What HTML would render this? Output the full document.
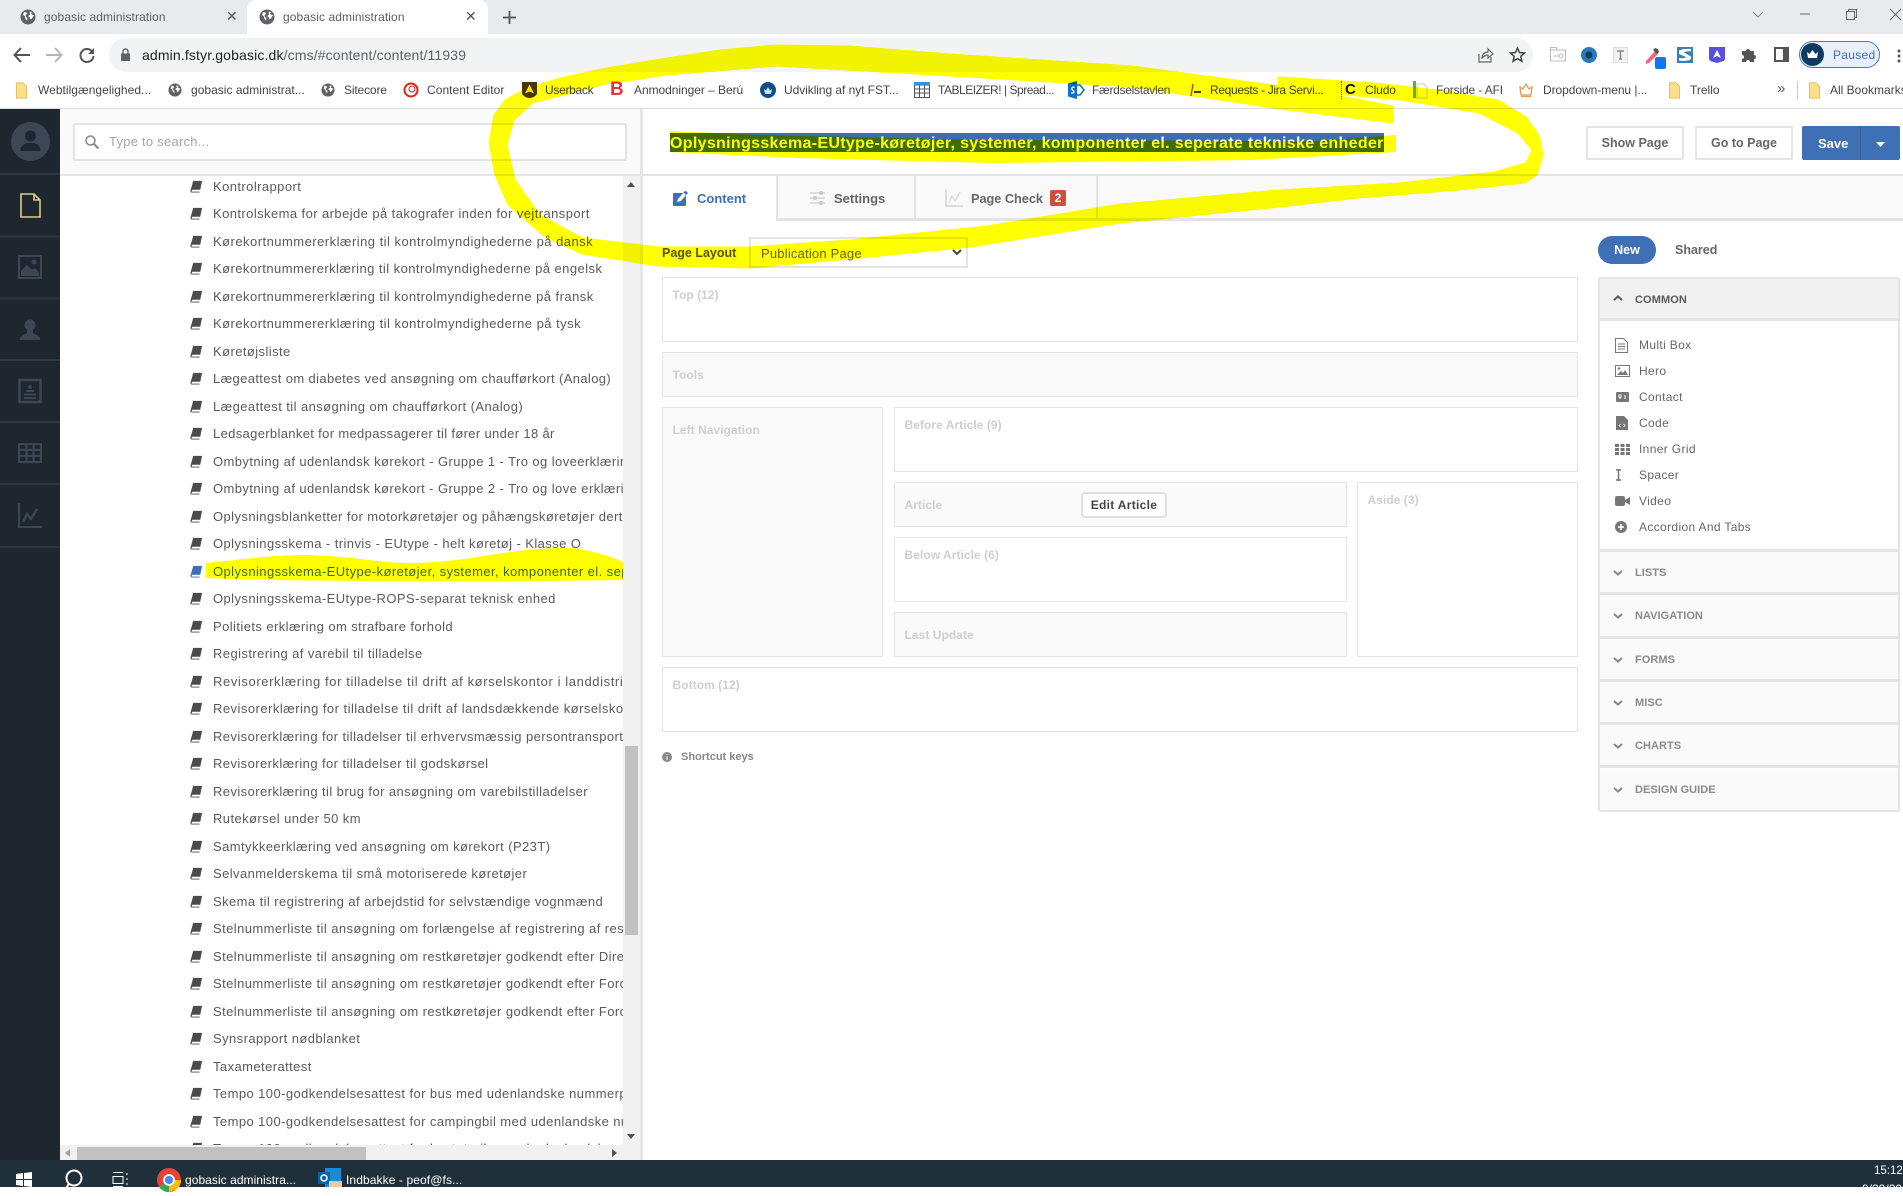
<!DOCTYPE html>
<html lang="da"><head><meta charset="utf-8"><title>gobasic administration</title>
<style>
*{box-sizing:border-box}
html,body{margin:0;padding:0;width:1903px;height:1187px;overflow:hidden;background:#fff;font-family:"Liberation Sans",sans-serif;color:#555}
.a{position:absolute;white-space:nowrap}
svg{position:absolute;overflow:visible}
.bm{position:absolute;top:83px;font-size:12px;line-height:14px;color:#444;white-space:nowrap}
.row{height:27.5px;line-height:27.5px;font-size:13px;letter-spacing:.42px;white-space:nowrap;padding-left:153px;position:relative;color:#5a5a5a}
.row svg{left:130px;top:7px}
.box{position:absolute;border:1.5px solid #e4e4e4;background:#fff;font-size:12px;font-weight:bold;color:#cfcfcf;padding-left:9.5px;letter-spacing:.05px}
.box.g{background:#fafafa}
.ph{position:absolute;left:1600px;width:298px;background:#fafafa;border-bottom:3px solid #e4e4e4;font-size:11px;font-weight:bold;color:#8a8a8a;letter-spacing:.05px}
.ph span{position:absolute;left:35px;top:15px}
.ph svg{left:13px;top:18px}
.it{position:absolute;left:1639px;font-size:12px;letter-spacing:.35px;color:#666;line-height:14px}
.btn{position:absolute;top:126px;height:34px;border:2px solid #e4e4e4;border-radius:2px;background:#fff;font-size:12.5px;font-weight:bold;color:#666;text-align:center;line-height:31px}
</style></head><body>
<svg width="0" height="0" style="position:absolute"><defs>
<symbol id="globe" viewBox="0 0 16 16"><circle cx="8" cy="8" r="7.5" fill="#5f6368"/><path d="M4 3l2.500.5.500 1.500-1.500 1 .5 2 1.500 1-.5 2.500-1.500-1.500-.5-2.500-2-1.500zM10 2.500l2 1-1 1.500 2 1 1.500.5-1.500 1-1 2-1.500 1-.5-2-1.500-1 .5-1.500 1.500-.5-1-1.500z" fill="#fff"/></symbol>
<symbol id="folder" viewBox="0 0 13 20"><path d="M1 2h7l4 4v13H1z" fill="#fbe08a" stroke="#e2b94e"/></symbol>
<symbol id="book" viewBox="0 0 14 14"><path d="M3.500 1h9.500l-2 9.500H2.500L1.500 12.500h9l-.2 1H1.500q-1.300-.5-1-2zM1.500 11.500" fill="#4b4b4b"/><path d="M2 12h9" stroke="#fff" stroke-width=".8"/></symbol>
<symbol id="bookb" viewBox="0 0 14 14"><path d="M3.500 1h9.500l-2 9.500H2.500L1.500 12.500h9l-.2 1H1.500q-1.300-.5-1-2z" fill="#3f6fb5"/><path d="M2 12h9" stroke="#fff" stroke-width=".8"/></symbol>
<symbol id="chd" viewBox="0 0 10 6"><path d="M1 1l4 3.500L9 1" fill="none" stroke="#888" stroke-width="2"/></symbol>
</defs></svg>

<!-- Chrome tab strip -->
<div class="a" style="left:0;top:0;width:1903px;height:34px;background:#e8eaed"></div>
<div class="a" style="left:247px;top:0;width:241px;height:34px;background:#fff;border-radius:9px 9px 0 0"></div>
<svg style="left:20px;top:9px" width="16" height="16"><use href="#globe"/></svg>
<div class="a" style="left:44px;top:10px;font-size:12px;line-height:14px;color:#5c5f63;letter-spacing:.1px">gobasic administration</div>
<div class="a" style="left:226px;top:8px;font-size:14px;line-height:17px;color:#555">✕</div>
<svg style="left:259px;top:9px" width="16" height="16"><use href="#globe"/></svg>
<div class="a" style="left:283px;top:10px;font-size:12px;line-height:14px;color:#5c5f63;letter-spacing:.1px">gobasic administration</div>
<div class="a" style="left:465px;top:8px;font-size:14px;line-height:17px;color:#555">✕</div>
<svg style="left:503px;top:11px" width="13" height="13"><path d="M6.500 0v13M0 6.500h13" stroke="#555" stroke-width="1.800"/></svg>
<svg style="left:1752px;top:11px" width="12" height="7"><path d="M1 1l5 5 5-5" fill="none" stroke="#888"/></svg>
<svg style="left:1800px;top:13px" width="10" height="2"><path d="M0 1h10" stroke="#666"/></svg>
<svg style="left:1846px;top:9px" width="11" height="11"><path d="M.5 2.500h8v8h-8zM2.500 2.500v-2h8v8h-2" fill="none" stroke="#666"/></svg>
<svg style="left:1890px;top:9px" width="11" height="11"><path d="M0 0l11 11M11 0L0 11" stroke="#666"/></svg>

<!-- toolbar -->
<div class="a" style="left:0;top:34px;width:1903px;height:75px;background:#fff"></div>
<div class="a" style="left:109px;top:38px;width:1424px;height:34px;background:#f1f3f4;border-radius:17px"></div>
<svg style="left:13px;top:47px" width="18" height="16"><path d="M8 1L1.500 8 8 15M2 8h15" fill="none" stroke="#555" stroke-width="2"/></svg>
<svg style="left:45px;top:47px" width="18" height="16"><path d="M10 1l6.500 7L10 15M16 8H1" fill="none" stroke="#b5b5b5" stroke-width="2"/></svg>
<svg style="left:79px;top:47px" width="16" height="16"><path d="M13.500 5A6.500 6.500 0 1 0 14.500 9" fill="none" stroke="#555" stroke-width="2"/><path d="M15 1v6H9z" fill="#555"/></svg>
<svg style="left:121px;top:48px" width="9" height="13"><path d="M0 5.500h9V13H0z" fill="#5f6368"/><path d="M2 6V3.500a2.500 2.500 0 0 1 5 0V6" fill="none" stroke="#5f6368" stroke-width="1.400"/></svg>
<div class="a" style="left:142px;top:47px;font-size:14px;line-height:16px;color:#222;letter-spacing:.14px">admin.fstyr.gobasic.dk<span style="color:#5f6368">/cms/#content/content/11939</span></div>
<svg style="left:1478px;top:47px" width="16" height="16"><path d="M1 7v8h12v-5" fill="none" stroke="#666" stroke-width="1.200"/><path d="M4 11c0-4 3-6 6-6V2l5 5-5 4V8c-2 0-4 1-6 3z" fill="none" stroke="#666" stroke-width="1.200"/></svg>
<svg style="left:1510px;top:47px" width="15" height="15"><path d="M7.500 1l2 4.500 5 .5-3.700 3.300 1.100 4.900-4.400-2.600-4.400 2.600 1.100-4.900L.5 6l5-.5z" fill="none" stroke="#444" stroke-width="1.500"/></svg>
<svg style="left:1550px;top:47px" width="16" height="15"><path d="M.5 3h15v11H.5zM.5 3V.5h6V3" fill="none" stroke="#bbb"/><path d="M3 9h6" stroke="#bbb"/><circle cx="11" cy="9" r="2" fill="none" stroke="#bbb"/></svg>
<svg style="left:1581px;top:47px" width="16" height="16"><circle cx="8" cy="8" r="8" fill="#2a79b8"/><circle cx="8" cy="8" r="3.500" fill="#103c60"/></svg>
<svg style="left:1613px;top:47px" width="15" height="16"><path d="M.5.500h14v15H.5z" fill="#f2f2f2" stroke="#ddd"/><path d="M4 4h7M7.500 4v8M6 12h3" stroke="#888" stroke-width="1.500" fill="none"/></svg>
<svg style="left:1645px;top:47px" width="22" height="23"><path d="M1 14L10 4l3 3-9 9-3 1z" fill="#e8688a"/><path d="M8 3l2-2 3 1 1 3-2 2z" fill="#555"/><rect x="10" y="10" width="11" height="12" rx="2" fill="#1a73e8"/></svg>
<svg style="left:1677px;top:47px" width="16" height="16"><rect x="0" y="0" width="16" height="16" fill="#3a7fb5"/><path d="M2 3.500c3-1.500 8-2 12-1.500v2.500c-3-.5-6 0-7 1l7 4c1 2-1 4-3 4-3 .5-7 .5-9 0v-2.500c3 .5 6 .5 7-1L2 7z" fill="#fff"/></svg>
<svg style="left:1709px;top:47px" width="16" height="16"><path d="M0 0h16v11q0 3-3 3.500L8 16l-5-1.500Q0 14 0 11z" fill="#5a4fd8"/><path d="M8 3l4 8-4-2-4 2z" fill="#fff"/></svg>
<svg style="left:1742px;top:48px" width="14" height="14"><path d="M0 3h4a2 2 0 0 1 4 0h4v4a2 2 0 0 1 0 4v3H8a2 2 0 0 0-4 0H0v-3a2 2 0 0 0 0-4z" fill="#555"/></svg>
<svg style="left:1774px;top:47px" width="15" height="15"><path d="M1 1h13v13H1z" fill="#fff" stroke="#555" stroke-width="2"/><path d="M9 1h5v13H9z" fill="#555"/></svg>
<div class="a" style="left:1799px;top:41px;width:81px;height:27px;border-radius:14px;background:#e8f0fb;border:1.500px solid #3c78d8"></div>
<svg style="left:1801px;top:43px" width="23" height="23"><circle cx="11.500" cy="11.500" r="11.500" fill="#0f3b63"/><path d="M6 9l2.500 2 3-4 3 4 2.500-2-1 6H7z" fill="#fff"/></svg>
<div class="a" style="left:1833px;top:48px;font-size:12px;line-height:14px;color:#3a6fc8;letter-spacing:.3px">Paused</div>
<svg style="left:1897px;top:49px" width="4" height="14"><circle cx="2" cy="2" r="1.500" fill="#555"/><circle cx="2" cy="7" r="1.500" fill="#555"/><circle cx="2" cy="12" r="1.500" fill="#555"/></svg>

<!-- bookmarks -->
<svg style="left:15px;top:81px" width="13" height="18"><use href="#folder"/></svg>
<div class="bm" style="left:38px;letter-spacing:.03px">Webtilgængelighed...</div>
<svg style="left:168px;top:83px" width="14" height="14"><use href="#globe"/></svg>
<div class="bm" style="left:191px;letter-spacing:.02px">gobasic administrat...</div>
<svg style="left:321px;top:83px" width="14" height="14"><use href="#globe"/></svg>
<div class="bm" style="left:344px;letter-spacing:-.15px">Sitecore</div>
<svg style="left:403px;top:82px" width="16" height="16"><circle cx="8" cy="8" r="6.500" fill="#fff" stroke="#e0201c" stroke-width="2"/><circle cx="9" cy="7" r="3" fill="none" stroke="#e0201c"/></svg>
<div class="bm" style="left:427px;letter-spacing:.05px">Content Editor</div>
<svg style="left:522px;top:82px" width="15" height="16"><path d="M0 0h15v12q-3 4-7.500 4T0 12z" fill="#4a3508"/><path d="M7.500 2.500l4.500 9-4.500-2-4.500 2z" fill="#ffe25a"/></svg>
<div class="bm" style="left:545px;letter-spacing:-.3px">Userback</div>
<div class="a" style="left:610px;top:80px;font-size:19px;line-height:20px;font-weight:bold;color:#e0383e">B</div>
<div class="bm" style="left:634px;letter-spacing:-.05px">Anmodninger – Berú</div>
<svg style="left:760px;top:82px" width="16" height="16"><circle cx="8" cy="8" r="8" fill="#0f4f85"/><path d="M4 7l2 1.500L8 5l2 3.500L12 7l-1 5H5z" fill="#cfe2f2"/></svg>
<div class="bm" style="left:784px;letter-spacing:-.06px">Udvikling af nyt FST...</div>
<svg style="left:914px;top:82px" width="16" height="16"><path d="M.5 3h15v12.500H.5zM.5 7h15M.5 11h15M5.500 3v12.500M10.500 3v12.500" fill="#fff" stroke="#555"/><rect width="16" height="3" fill="#2f90e8"/></svg>
<div class="bm" style="left:938px;letter-spacing:-.47px">TABLEIZER! | Spread...</div>
<svg style="left:1068px;top:81px" width="16" height="18"><path d="M0 2.500L9 0v18l-9-2.500z" fill="#0f6fc6"/><path d="M9 4h3l4 5-4 5H9" fill="none" stroke="#0f6fc6" stroke-width="1.500"/><path d="M6.500 6.500C4 5.500 3 7.500 4.500 9S7 11 5 12H3" fill="none" stroke="#fff" stroke-width="1.300"/></svg>
<div class="bm" style="left:1092px;letter-spacing:-.28px">Færdselstavlen</div>
<svg style="left:1187px;top:83px" width="16" height="14"><path d="M4 13L6 1" stroke="#c33" stroke-width="1.300"/><path d="M7 8h7v2H7z" fill="#444"/></svg>
<div class="bm" style="left:1210px;letter-spacing:-.33px">Requests - Jira Servi...</div>
<div class="a" style="left:1341px;top:81px;width:1px;height:18px;border-left:1px dotted #a33"></div>
<div class="a" style="left:1345px;top:81px;font-size:15px;line-height:18px;font-weight:bold;color:#111">C</div>
<div class="bm" style="left:1365px;letter-spacing:-.1px">Cludo</div>
<svg style="left:1413px;top:81px" width="15" height="18"><path d="M0 0h3v17H0z" fill="#6aa84f"/><path d="M4 3h7l3 3v11H4z" fill="#fff" stroke="#ccc"/></svg>
<div class="bm" style="left:1436px;letter-spacing:-.13px">Forside - AFI</div>
<svg style="left:1519px;top:82px" width="14" height="16"><path d="M1 5l3 2 3-5 3 5 3-2-1 8H2zM2 14.500h10" fill="none" stroke="#e89a50" stroke-width="1.300"/></svg>
<div class="bm" style="left:1543px;letter-spacing:-.05px">Dropdown-menu |...</div>
<svg style="left:1668px;top:81px" width="13" height="18"><use href="#folder"/></svg>
<div class="bm" style="left:1690px">Trello</div>
<div class="a" style="left:1777px;top:80px;font-size:15px;line-height:18px;color:#555">»</div>
<div class="a" style="left:1797px;top:81px;width:1px;height:18px;background:#ccc"></div>
<svg style="left:1808px;top:81px" width="13" height="18"><use href="#folder"/></svg>
<div class="bm" style="left:1830px">All Bookmarks</div>
<div class="a" style="left:0;top:108px;width:1903px;height:1px;background:#dadce0"></div>

<!-- sidebar -->
<div class="a" style="left:0;top:109px;width:60px;height:1051px;background:#1e2630"></div>
<svg style="left:0;top:109px" width="60" height="440"><path d="M0 65h60M0 127.500h60M0 189.500h60M0 251h60M0 313h60M0 375h60M0 438h60" stroke="#2d3641" stroke-width="2"/></svg>
<svg style="left:11px;top:122px" width="39" height="39"><circle cx="19.500" cy="19.500" r="19.500" fill="#3d4654"/><circle cx="19.500" cy="14" r="5.500" fill="#1e2630"/><path d="M9.500 29q0-8 10-8t10 8z" fill="#1e2630"/></svg>
<svg style="left:20px;top:193px" width="21" height="25"><path d="M1 1h13l6 6v17H1zM14 1v6h6" fill="none" stroke="#dccd7d" stroke-width="1.600"/></svg>
<svg style="left:18px;top:255px" width="24" height="24"><rect x="1" y="1" width="22" height="22" fill="none" stroke="#3d4654" stroke-width="2"/><path d="M3 21v-5l6-6 5 5 3-2 4 5v3z" fill="#3d4654"/><circle cx="16" cy="7" r="2.500" fill="#3d4654"/></svg>
<svg style="left:19px;top:319px" width="22" height="22"><circle cx="11" cy="6" r="5.500" fill="#3d4654"/><path d="M8 11h6v3l7 4v3H1v-3l7-4z" fill="#3d4654"/></svg>
<svg style="left:18px;top:379px" width="24" height="24"><rect x="1.500" y="1" width="21" height="22" fill="none" stroke="#3d4654" stroke-width="2.500"/><circle cx="12" cy="8" r="2" fill="#3d4654"/><path d="M8 12h8M6 15.500h12M6 19h12" stroke="#3d4654" stroke-width="2"/></svg>
<svg style="left:18px;top:443px" width="24" height="20"><path d="M1 1h22v18H1zM1 7h22M1 13h22M8.500 1v18M15.500 1v18" fill="none" stroke="#3d4654" stroke-width="2"/></svg>
<svg style="left:18px;top:503px" width="24" height="25"><path d="M1 0v24h23" fill="none" stroke="#3d4654" stroke-width="2"/><path d="M5 19l4-8 4 5 6-10" fill="none" stroke="#3d4654" stroke-width="2.500"/></svg>

<!-- search -->
<div class="a" style="left:60px;top:109px;width:580px;height:67px;background:#fafafa;border-bottom:2px solid #e6e6e6"></div>
<div class="a" style="left:73px;top:123px;width:554px;height:38px;background:#fff;border:2px solid #e4e4e4;border-radius:2px"></div>
<svg style="left:85px;top:135px" width="14" height="14"><circle cx="5.500" cy="5.500" r="4.500" fill="none" stroke="#888" stroke-width="1.500"/><path d="M9 9l4.500 4.500" stroke="#888" stroke-width="2"/></svg>
<div class="a" style="left:109px;top:134px;font-size:13px;line-height:16px;color:#a5a5a5;letter-spacing:.25px">Type to search...</div>

<!-- list -->
<div class="a" style="left:60px;top:176px;width:563px;height:969px;overflow:hidden;background:#fff">
<div style="margin-top:-3.5px">
<div class="row"><svg width="13" height="13"><use href="#book"/></svg>Kontrolrapport</div>
<div class="row"><svg width="13" height="13"><use href="#book"/></svg>Kontrolskema for arbejde på takografer inden for vejtransport</div>
<div class="row" style="letter-spacing:.47px"><svg width="13" height="13"><use href="#book"/></svg>Kørekortnummererklæring til kontrolmyndighederne på dansk</div>
<div class="row" style="letter-spacing:.44px"><svg width="13" height="13"><use href="#book"/></svg>Kørekortnummererklæring til kontrolmyndighederne på engelsk</div>
<div class="row" style="letter-spacing:.46px"><svg width="13" height="13"><use href="#book"/></svg>Kørekortnummererklæring til kontrolmyndighederne på fransk</div>
<div class="row" style="letter-spacing:.47px"><svg width="13" height="13"><use href="#book"/></svg>Kørekortnummererklæring til kontrolmyndighederne på tysk</div>
<div class="row"><svg width="13" height="13"><use href="#book"/></svg>Køretøjsliste</div>
<div class="row" style="letter-spacing:.37px"><svg width="13" height="13"><use href="#book"/></svg>Lægeattest om diabetes ved ansøgning om chaufførkort (Analog)</div>
<div class="row"><svg width="13" height="13"><use href="#book"/></svg>Lægeattest til ansøgning om chaufførkort (Analog)</div>
<div class="row" style="letter-spacing:.34px"><svg width="13" height="13"><use href="#book"/></svg>Ledsagerblanket for medpassagerer til fører under 18 år</div>
<div class="row"><svg width="13" height="13"><use href="#book"/></svg>Ombytning af udenlandsk kørekort - Gruppe 1 - Tro og loveerklæring</div>
<div class="row"><svg width="13" height="13"><use href="#book"/></svg>Ombytning af udenlandsk kørekort - Gruppe 2 - Tro og love erklæring</div>
<div class="row"><svg width="13" height="13"><use href="#book"/></svg>Oplysningsblanketter for motorkøretøjer og påhængskøretøjer dertil</div>
<div class="row"><svg width="13" height="13"><use href="#book"/></svg>Oplysningsskema - trinvis - EUtype - helt køretøj - Klasse O</div>
<div class="row" style="color:#3f6fb5"><svg width="13" height="13"><use href="#bookb"/></svg>Oplysningsskema-EUtype-køretøjer, systemer, komponenter el. seperate tekniske enheder</div>
<div class="row"><svg width="13" height="13"><use href="#book"/></svg>Oplysningsskema-EUtype-ROPS-separat teknisk enhed</div>
<div class="row"><svg width="13" height="13"><use href="#book"/></svg>Politiets erklæring om strafbare forhold</div>
<div class="row"><svg width="13" height="13"><use href="#book"/></svg>Registrering af varebil til tilladelse</div>
<div class="row" style="letter-spacing:.6px"><svg width="13" height="13"><use href="#book"/></svg>Revisorerklæring for tilladelse til drift af kørselskontor i landdistrikter</div>
<div class="row" style="letter-spacing:.47px"><svg width="13" height="13"><use href="#book"/></svg>Revisorerklæring for tilladelse til drift af landsdækkende kørselskontor</div>
<div class="row"><svg width="13" height="13"><use href="#book"/></svg>Revisorerklæring for tilladelser til erhvervsmæssig persontransport</div>
<div class="row"><svg width="13" height="13"><use href="#book"/></svg>Revisorerklæring for tilladelser til godskørsel</div>
<div class="row"><svg width="13" height="13"><use href="#book"/></svg>Revisorerklæring til brug for ansøgning om varebilstilladelser</div>
<div class="row"><svg width="13" height="13"><use href="#book"/></svg>Rutekørsel under 50 km</div>
<div class="row"><svg width="13" height="13"><use href="#book"/></svg>Samtykkeerklæring ved ansøgning om kørekort (P23T)</div>
<div class="row"><svg width="13" height="13"><use href="#book"/></svg>Selvanmelderskema til små motoriserede køretøjer</div>
<div class="row"><svg width="13" height="13"><use href="#book"/></svg>Skema til registrering af arbejdstid for selvstændige vognmænd</div>
<div class="row"><svg width="13" height="13"><use href="#book"/></svg>Stelnummerliste til ansøgning om forlængelse af registrering af restkøretøjer</div>
<div class="row"><svg width="13" height="13"><use href="#book"/></svg>Stelnummerliste til ansøgning om restkøretøjer godkendt efter Direktiv</div>
<div class="row"><svg width="13" height="13"><use href="#book"/></svg>Stelnummerliste til ansøgning om restkøretøjer godkendt efter Forordning</div>
<div class="row"><svg width="13" height="13"><use href="#book"/></svg>Stelnummerliste til ansøgning om restkøretøjer godkendt efter Forordning</div>
<div class="row"><svg width="13" height="13"><use href="#book"/></svg>Synsrapport nødblanket</div>
<div class="row"><svg width="13" height="13"><use href="#book"/></svg>Taxameterattest</div>
<div class="row"><svg width="13" height="13"><use href="#book"/></svg>Tempo 100-godkendelsesattest for bus med udenlandske nummerplader</div>
<div class="row"><svg width="13" height="13"><use href="#book"/></svg>Tempo 100-godkendelsesattest for campingbil med udenlandske nummerplader</div>
<div class="row"><svg width="13" height="13"><use href="#book"/></svg>Tempo 100-godkendelsesattest for hestetrailer med udenlandske nummerplader</div>
</div></div>

<!-- scrollbars -->
<div class="a" style="left:623px;top:176px;width:17px;height:984px;background:#f1f1f1"></div>
<div class="a" style="left:625px;top:746px;width:13px;height:189px;background:#c1c1c1"></div>
<svg style="left:627px;top:182px" width="8" height="5"><path d="M4 0l4 5H0z" fill="#505050"/></svg>
<svg style="left:627px;top:1134px" width="8" height="5"><path d="M0 0h8L4 5z" fill="#505050"/></svg>
<div class="a" style="left:60px;top:1145px;width:563px;height:15px;background:#f1f1f1"></div>
<div class="a" style="left:77px;top:1147px;width:289px;height:13px;background:#c1c1c1"></div>
<svg style="left:65px;top:1149px" width="5" height="8"><path d="M5 0v8L0 4z" fill="#a3a3a3"/></svg>
<svg style="left:612px;top:1149px" width="5" height="8"><path d="M0 0v8l5-4z" fill="#505050"/></svg>
<div class="a" style="left:640px;top:109px;width:3px;height:1051px;background:#e6e6e6"></div>

<!-- header -->
<div class="a" style="left:670px;top:133px;width:714px;height:19px;background:#3f6db5"></div>
<div class="a" style="left:670px;top:134px;font-size:16px;line-height:19px;font-weight:bold;color:#fff;letter-spacing:.32px">Oplysningsskema-EUtype-køretøjer, systemer, komponenter el. seperate tekniske enheder</div>
<div class="btn" style="left:1586px;width:98px">Show Page</div>
<div class="btn" style="left:1695px;width:98px">Go to Page</div>
<div class="a" style="left:1802px;top:126px;width:98px;height:34px;background:#3f6fb5;border-radius:2px;color:#fff;font-size:13px;font-weight:bold;line-height:35px;text-indent:16px">Save</div>
<div class="a" style="left:1860px;top:126px;width:1px;height:34px;background:#36609d"></div>
<svg style="left:1876px;top:142px" width="9" height="5"><path d="M0 0h9L4.500 5z" fill="#fff"/></svg>

<!-- tabs -->
<div class="a" style="left:643px;top:174px;width:1260px;height:47px;background:#f9f9f9;border-top:2px solid #e3e3e3;border-bottom:3px solid #e3e3e3"></div>
<div class="a" style="left:643px;top:176px;width:135px;height:45px;background:#fff"></div>
<div class="a" style="left:776px;top:176px;width:2px;height:45px;background:#e3e3e3"></div>
<div class="a" style="left:914px;top:176px;width:2px;height:43px;background:#e3e3e3"></div>
<div class="a" style="left:1096px;top:176px;width:2px;height:43px;background:#e3e3e3"></div>
<svg style="left:673px;top:191px" width="15" height="15"><rect y="2" width="13" height="13" rx="1" fill="#3f6fb5"/><path d="M4 11l1-3 6-7 3 2-6 7z" fill="#fff"/><path d="M10 1l3-1 2 2-2 2z" fill="#3f6fb5"/></svg>
<div class="a" style="left:697px;top:190.500px;font-size:13px;line-height:16px;font-weight:bold;color:#3f6fb5">Content</div>
<svg style="left:810px;top:191px" width="15" height="14"><path d="M0 2h15M0 7h15M0 12h15" stroke="#ddd" stroke-width="2"/><circle cx="11" cy="2" r="2" fill="#ccc"/><circle cx="5" cy="7" r="2" fill="#ccc"/><circle cx="11" cy="12" r="2" fill="#ccc"/></svg>
<div class="a" style="left:834px;top:190.500px;font-size:13px;line-height:16px;font-weight:bold;color:#666">Settings</div>
<svg style="left:945px;top:189px" width="18" height="18"><path d="M1 0v17h17" fill="none" stroke="#ddd" stroke-width="2"/><path d="M4 14l3-7 3 5 5-9" fill="none" stroke="#ddd" stroke-width="1.500"/></svg>
<div class="a" style="left:971px;top:190.500px;font-size:12.700px;line-height:16px;font-weight:bold;color:#666">Page Check</div>
<div class="a" style="left:1050px;top:190px;width:16px;height:16px;background:#c9513f;border-radius:2px;color:#fff;font-size:12px;font-weight:bold;line-height:16px;text-align:center">2</div>

<!-- page layout -->
<div class="a" style="left:662px;top:245.500px;font-size:12.5px;line-height:15px;font-weight:bold;color:#555">Page Layout</div>
<div class="a" style="left:748.500px;top:237px;width:219px;height:31px;border:2px solid #e4e4e4;background:#fff"></div>
<div class="a" style="left:761px;top:245.500px;font-size:13px;line-height:15px;color:#666;letter-spacing:.2px">Publication Page</div>
<svg style="left:952px;top:249px" width="10" height="7"><path d="M1 1l4 4 4-4" fill="none" stroke="#444" stroke-width="2"/></svg>

<!-- layout boxes -->
<div class="box" style="left:662px;top:277px;width:916px;height:65px;padding-top:10px">Top (12)</div>
<div class="box g" style="left:662px;top:352px;width:916px;height:45px;padding-top:15px">Tools</div>
<div class="box g" style="left:662px;top:407px;width:221px;height:250px;padding-top:15px">Left Navigation</div>
<div class="box" style="left:894px;top:407px;width:684px;height:65px;padding-top:10px">Before Article (9)</div>
<div class="box g" style="left:894px;top:482px;width:453px;height:45px;padding-top:15px">Article</div>
<div class="a" style="left:1081px;top:492px;width:86px;height:26px;background:#fff;border:2px solid #e0e0e0;border-radius:4px;font-size:12px;font-weight:bold;color:#444;line-height:23px;text-align:center;letter-spacing:.3px">Edit Article</div>
<div class="box" style="left:894px;top:537px;width:453px;height:65px;padding-top:10px">Below Article (6)</div>
<div class="box g" style="left:894px;top:612px;width:453px;height:45px;padding-top:15px">Last Update</div>
<div class="box" style="left:1357px;top:482px;width:221px;height:175px;padding-top:10px">Aside (3)</div>
<div class="box" style="left:662px;top:667px;width:916px;height:65px;padding-top:10px">Bottom (12)</div>
<svg style="left:662px;top:752px" width="10" height="10"><circle cx="5" cy="5" r="5" fill="#8a8a8a"/><path d="M5 2v1M5 4.500V8" stroke="#fff"/></svg>
<div class="a" style="left:681px;top:750px;font-size:11px;line-height:14px;font-weight:bold;color:#888">Shortcut keys</div>

<!-- right panel -->
<div class="a" style="left:1598px;top:236px;width:58px;height:28px;background:#3f6fb5;border-radius:14px;color:#fff;font-size:12.5px;font-weight:bold;line-height:28px;text-align:center">New</div>
<div class="a" style="left:1675px;top:243px;font-size:12.5px;line-height:15px;font-weight:bold;color:#666">Shared</div>
<div class="a" style="left:1598px;top:277px;width:302px;height:535px;border:2px solid #e4e4e4;border-radius:3px;background:#fff"></div>
<div class="a" style="left:1600px;top:279px;width:298px;height:42px;background:#f1f1f1;border-bottom:3px solid #e4e4e4"></div>
<svg style="left:1613px;top:295px" width="10" height="6"><path d="M1 5L5 1.500 9 5" fill="none" stroke="#555" stroke-width="2"/></svg>
<div class="a" style="left:1635px;top:293px;font-size:11px;line-height:14px;font-weight:bold;color:#5a5a5a;letter-spacing:.1px">COMMON</div>

<svg style="left:1615px;top:338px" width="13" height="15"><path d="M.5.500h8l4 4v10H.5zM3 6h7M3 8.500h7M3 11h7" fill="none" stroke="#777"/></svg>
<div class="it" style="top:338px">Multi Box</div>
<svg style="left:1615px;top:365px" width="15" height="12"><rect x=".5" y=".5" width="14" height="11" fill="none" stroke="#777"/><path d="M2 10l4-4 2 2 2-3 3 5z" fill="#777"/><circle cx="4" cy="3.500" r="1.200" fill="#777"/></svg>
<div class="it" style="top:364px">Hero</div>
<svg style="left:1616px;top:392px" width="13" height="10"><rect width="13" height="10" rx="1" fill="#777"/><path d="M3 3h2v2H3zM3 6h2M8 4h2M8 6h2" stroke="#fff"/></svg>
<div class="it" style="top:390px">Contact</div>
<svg style="left:1616px;top:416px" width="12" height="14"><path d="M0 0h8l4 4v10H0z" fill="#777"/><path d="M4.500 8l-1.500 1.500 1.500 1.500M7.500 8L9 9.500 7.500 11" stroke="#fff" fill="none" stroke-width=".8"/></svg>
<div class="it" style="top:416px">Code</div>
<svg style="left:1615px;top:444px" width="15" height="11"><path d="M0 0h4v3H0zM5.500 0h4v3h-4zM11 0h4v3h-4zM0 4h4v3H0zM5.500 4h4v3h-4zM11 4h4v3h-4zM0 8h4v3H0zM5.500 8h4v3h-4zM11 8h4v3h-4z" fill="#777"/></svg>
<div class="it" style="top:442px">Inner Grid</div>
<svg style="left:1615px;top:468px" width="7" height="14"><path d="M3.500 1v12M1 2h5M1 12h5" stroke="#777" stroke-width="1.500" fill="none"/></svg>
<div class="it" style="top:468px">Spacer</div>
<svg style="left:1615px;top:496px" width="15" height="10"><rect width="10" height="10" rx="2" fill="#777"/><path d="M10 4l5-3v8l-5-3z" fill="#777"/></svg>
<div class="it" style="top:494px">Video</div>
<svg style="left:1615px;top:521px" width="12" height="12"><circle cx="6" cy="6" r="6" fill="#777"/><path d="M6 3v6M3 6h6" stroke="#fff" stroke-width="1.600"/></svg>
<div class="it" style="top:520px">Accordion And Tabs</div>

<div class="ph" style="top:549px;height:46px;border-top:3px solid #e4e4e4"><span>LISTS</span><svg width="10" height="6"><use href="#chd"/></svg></div>
<div class="ph" style="top:595px;height:44px"><span>NAVIGATION</span><svg width="10" height="6"><use href="#chd"/></svg></div>
<div class="ph" style="top:639px;height:43px"><span>FORMS</span><svg width="10" height="6"><use href="#chd"/></svg></div>
<div class="ph" style="top:682px;height:43px"><span>MISC</span><svg width="10" height="6"><use href="#chd"/></svg></div>
<div class="ph" style="top:725px;height:43px"><span>CHARTS</span><svg width="10" height="6"><use href="#chd"/></svg></div>
<div class="ph" style="top:769px;height:41px;border-bottom:0"><span>DESIGN GUIDE</span><svg width="10" height="6"><use href="#chd"/></svg></div>

<!-- taskbar -->
<div class="a" style="left:0;top:1160px;width:1903px;height:27px;background:#20303a"></div>
<svg style="left:16px;top:1172px" width="16" height="15"><path d="M0 2l7-1v6H0zM8 1l8-1v7H8zM0 8h7v6l-7-1zM8 8h8v7l-8-1z" fill="#fff"/></svg>
<svg style="left:64px;top:1169px" width="20" height="18"><circle cx="10" cy="9" r="7.500" fill="none" stroke="#fff" stroke-width="2"/><path d="M5 15l-3 4" stroke="#fff" stroke-width="2"/></svg>
<svg style="left:112px;top:1172px" width="17" height="15"><path d="M1 .5h10M1 4.500h10v7H1zM1 14.500h10M15 1v2M15 6v2M15 11v2" fill="none" stroke="#fff"/></svg>
<svg style="left:157px;top:1168px" width="24" height="19"><circle cx="12" cy="12" r="12" fill="#ea4335"/><path d="M12 12L2 19q5 6 12 5z" fill="#34a853"/><path d="M12 12l12 0q0 7-6 10l-6 2z" fill="#fbbc05"/><circle cx="12" cy="12" r="5" fill="#4a8af4" stroke="#fff" stroke-width="1.800"/></svg>
<div class="a" style="left:185px;top:1173px;font-size:12px;line-height:14px;color:#fff;letter-spacing:.05px">gobasic administra...</div>
<svg style="left:318px;top:1168px" width="27" height="19"><rect x="7" y="0" width="16" height="19" fill="#1a8ad4"/><rect x="0" y="4" width="12" height="12" rx="1" fill="#0a60b0"/><circle cx="6" cy="10" r="3" fill="none" stroke="#fff" stroke-width="1.500"/><path d="M11 13h13v6H11z" fill="#f0c89a"/></svg>
<div class="a" style="left:346px;top:1173px;font-size:12px;line-height:14px;color:#fff;letter-spacing:.1px">Indbakke - peof@fs...</div>
<div class="a" style="left:1874px;top:1164px;font-size:11.500px;line-height:14px;color:#fff">15:12</div>
<div class="a" style="left:1862px;top:1182px;font-size:12px;line-height:14px;color:#fff">9/29/2022</div>

<!-- highlighter overlay -->
<svg style="left:0;top:0;mix-blend-mode:multiply;pointer-events:none" width="1903" height="1187" viewBox="0 0 1903 1187">
<path d="M1393 106L1335 95L1280 86L1132 66L950 54L850 46L776 45L720 50L667 58L606 68L560 78L527 88L505 100L494 115L489 143L495 175L508 205L545 237L582 254L658 266L750 268L850 259L971 247L1120 223L1280 207L1359 198L1459 190L1525 183L1537 175L1543 155L1539 135L1526 117L1498 100L1436 90L1375 83L1278 77L1278 89L1401 100L1479 113L1518 133L1532 150L1526 163L1494 172L1399 183L1280 190L1120 204L987 226L850 240L750 247L658 247L582 238L540 215L515 180L507 145L514 120L533 103L606 84L667 75L776 66L950 76L1132 87L1280 109L1393 123Z" fill="#ff0" stroke="#ff0" stroke-width="1" stroke-linejoin="round"/>
<path d="M670 131L760 135L850 137L990 140L1250 141L1320 141L1396 135L1396 152L1250 160L990 163L800 158L670 152Z" fill="#ff0"/>
<path d="M206 563C240 560 270 555 306 555C350 556 380 563 408 563C450 563 480 556 510 552C530 549 550 548 571 548C590 550 610 556 623 562L623 580C500 582 300 582 206 578Z" fill="#ff0"/>
</svg>
</body></html>
